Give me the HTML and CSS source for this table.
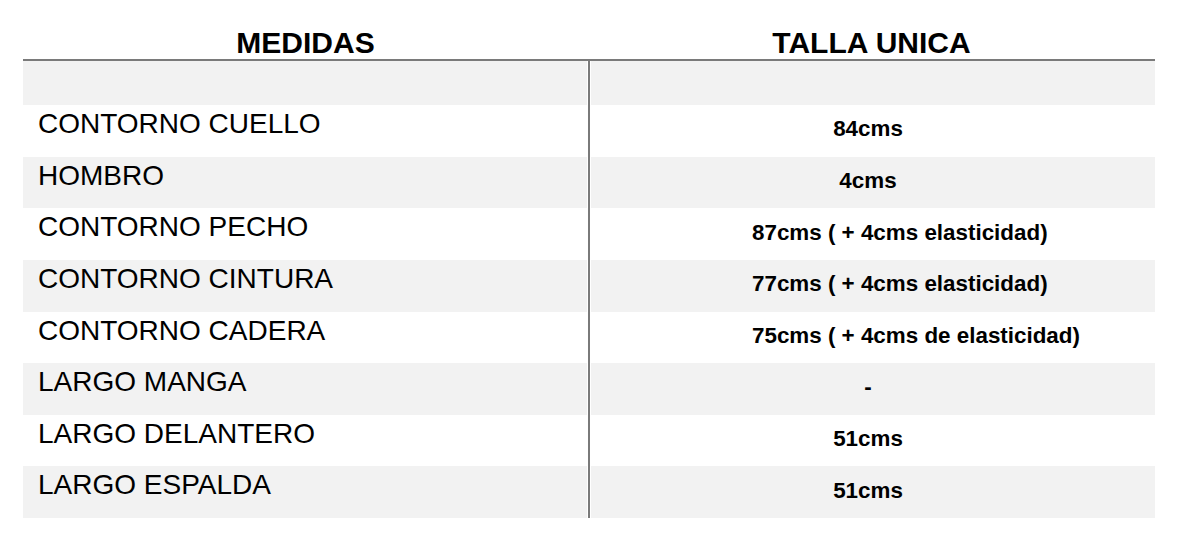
FILE: index.html
```html
<!DOCTYPE html>
<html lang="es">
<head>
<meta charset="utf-8">
<title>Medidas</title>
<link rel="stylesheet" href="styles.css">
</head>
<body>
<div class="sheet">
  <div class="head">
    <div class="head__cell head__cell--left">MEDIDAS</div>
    <div class="head__cell head__cell--right">TALLA UNICA</div>
  </div>
  <div class="rows">
    <div class="row row--gray row--first">
      <div class="lab"></div>
      <div class="val"></div>
    </div>
    <div class="row">
      <div class="lab">CONTORNO CUELLO</div>
      <div class="val">84cms</div>
    </div>
    <div class="row row--gray">
      <div class="lab">HOMBRO</div>
      <div class="val">4cms</div>
    </div>
    <div class="row">
      <div class="lab">CONTORNO PECHO</div>
      <div class="val val--wide">87cms ( + 4cms elasticidad)</div>
    </div>
    <div class="row row--gray">
      <div class="lab">CONTORNO CINTURA</div>
      <div class="val val--wide">77cms ( + 4cms elasticidad)</div>
    </div>
    <div class="row">
      <div class="lab">CONTORNO CADERA</div>
      <div class="val val--wide">75cms ( + 4cms de elasticidad)</div>
    </div>
    <div class="row row--gray">
      <div class="lab">LARGO MANGA</div>
      <div class="val">-</div>
    </div>
    <div class="row">
      <div class="lab">LARGO DELANTERO</div>
      <div class="val">51cms</div>
    </div>
    <div class="row row--gray">
      <div class="lab">LARGO ESPALDA</div>
      <div class="val">51cms</div>
    </div>
  </div>
</div>
</body>
</html>
```
FILE: styles.css
```css
html, body {
  margin: 0;
  padding: 0;
  background: #ffffff;
}

body {
  font-family: "Liberation Sans", Arial, sans-serif;
  color: #000000;
}

.sheet {
  width: 1132px;
  margin-left: 23px;
}

.head {
  display: flex;
  height: 59px;
  border-bottom: 2px solid #7a7a7a;
}

.head__cell {
  font-weight: bold;
  font-size: 30px;
  line-height: 33px;
  padding-top: 26px;
  text-align: center;
  box-sizing: border-box;
}

.head__cell--left {
  width: 565px;
}

.head__cell--right {
  flex: 1;
}

.rows {
  display: flex;
  flex-direction: column;
}

.row {
  display: flex;
  height: 51.625px;
}

.row--first {
  height: 44px;
}

.lab {
  width: 564px;
  margin-right: 1px;
  box-sizing: border-box;
  padding: 3px 0 0 15px;
  font-size: 28px;
  line-height: 32px;
  white-space: nowrap;
}

.val {
  flex: 1;
  display: flex;
  align-items: center;
  justify-content: center;
  padding: 0 9px 3px 0;
  border-left: 2px solid #7a7a7a;
  box-shadow: inset 1px 0 0 #ffffff;
  font-weight: bold;
  font-size: 22.4px;
  line-height: 26px;
  white-space: nowrap;
}

.val--wide {
  justify-content: flex-start;
  padding-left: 162px;
  padding-right: 0;
}

.row--gray .lab,
.row--gray .val {
  background: #f2f2f2;
}
```
